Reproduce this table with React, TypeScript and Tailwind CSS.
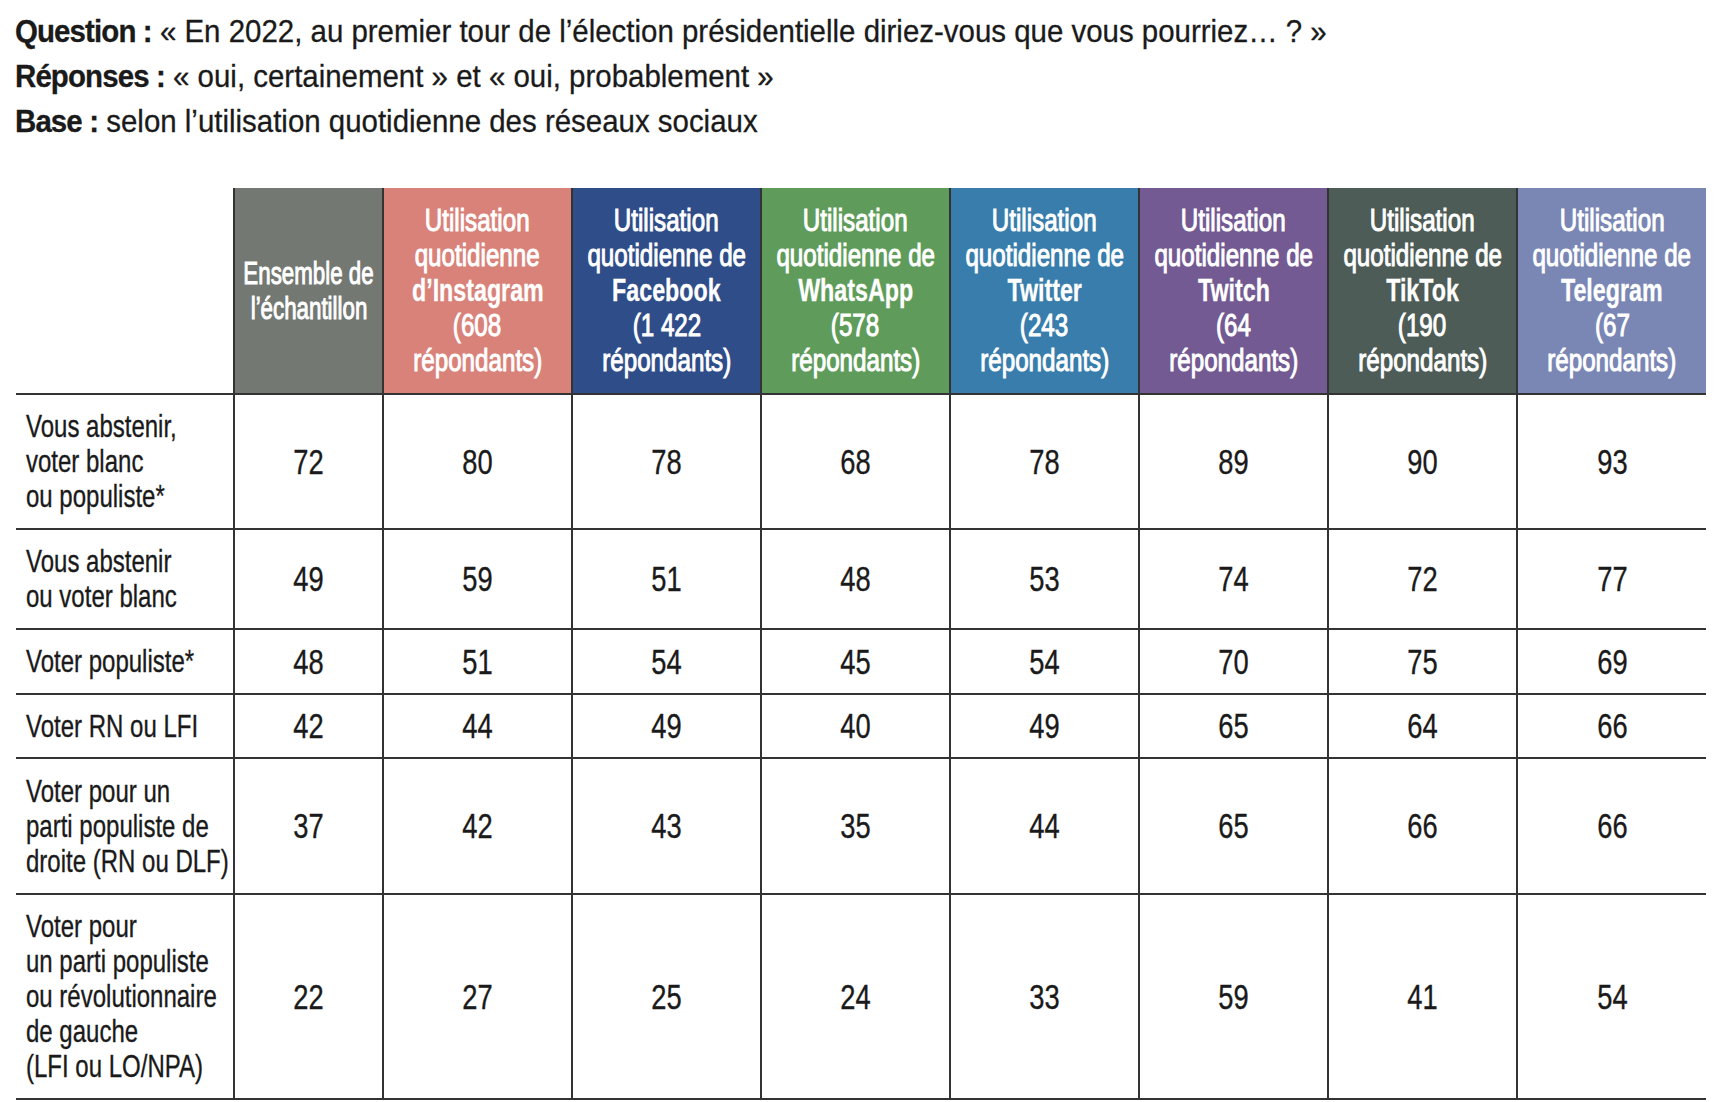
const columns = [
  { bg: "bg-[#737873]", lines: ["Ensemble de", "l’échantillon"], bold: -1 },
  { bg: "bg-[#d8827a]", lines: ["Utilisation", "quotidienne", "d’Instagram", "(608", "répondants)"], bold: 2 },
  { bg: "bg-[#2f4d88]", lines: ["Utilisation", "quotidienne de", "Facebook", "(1 422", "répondants)"], bold: 2 },
  { bg: "bg-[#5f9c5b]", lines: ["Utilisation", "quotidienne de", "WhatsApp", "(578", "répondants)"], bold: 2 },
  { bg: "bg-[#387dab]", lines: ["Utilisation", "quotidienne de", "Twitter", "(243", "répondants)"], bold: 2 },
  { bg: "bg-[#735a92]", lines: ["Utilisation", "quotidienne de", "Twitch", "(64", "répondants)"], bold: 2 },
  { bg: "bg-[#4d5c56]", lines: ["Utilisation", "quotidienne de", "TikTok", "(190", "répondants)"], bold: 2 },
  { bg: "bg-[#7a87b4]", lines: ["Utilisation", "quotidienne de", "Telegram", "(67", "répondants)"], bold: 2 },
];

const rows = [
  { label: ["Vous abstenir,", "voter blanc", "ou populiste*"], h: "h-[135px]", values: [72, 80, 78, 68, 78, 89, 90, 93] },
  { label: ["Vous abstenir", "ou voter blanc"], h: "h-[100px]", values: [49, 59, 51, 48, 53, 74, 72, 77] },
  { label: ["Voter populiste*"], h: "h-[65px]", values: [48, 51, 54, 45, 54, 70, 75, 69] },
  { label: ["Voter RN ou LFI"], h: "h-[64px]", values: [42, 44, 49, 40, 49, 65, 64, 66] },
  { label: ["Voter pour un", "parti populiste de", "droite (RN ou DLF)"], h: "h-[136px]", values: [37, 42, 43, 35, 44, 65, 66, 66] },
  {
    label: ["Voter pour", "un parti populiste", "ou révolutionnaire", "de gauche", "(LFI ou LO/NPA)"],
    h: "h-[205px]",
    values: [22, 27, 25, 24, 33, 59, 41, 54],
  },
];

// Liberation Sans squeezed horizontally to stand in for a condensed grotesque
function Narrow({ className = "", children }: { className?: string; children: React.ReactNode }) {
  return <span className={`inline-block whitespace-nowrap ${className}`}>{children}</span>;
}

export default function App() {
  return (
    <div className="min-h-screen bg-white pl-[15px] pt-[9px] font-['Liberation_Sans',Arial,sans-serif] text-[#1a1a1a]">
      <div className="text-[32px] leading-[45px] [-webkit-text-stroke:0.3px_#1a1a1a]">
        <p>
          <Narrow className="origin-left scale-x-[0.92]">
            <b className="font-bold tracking-[-0.03em]">Question :</b> « En 2022, au premier tour de l’élection présidentielle diriez-vous que vous pourriez… ? »
          </Narrow>
        </p>
        <p>
          <Narrow className="origin-left scale-x-[0.92]">
            <b className="font-bold tracking-[-0.03em]">Réponses :</b> « oui, certainement » et « oui, probablement »
          </Narrow>
        </p>
        <p>
          <Narrow className="origin-left scale-x-[0.92]">
            <b className="font-bold tracking-[-0.03em]">Base :</b> selon l’utilisation quotidienne des réseaux sociaux
          </Narrow>
        </p>
      </div>

      <table className="ml-px mt-[44px] w-[1690px] table-fixed border-collapse">
        <colgroup>
          <col className="w-[218px]" />
          <col className="w-[149px]" />
          {columns.slice(1).map((c) => (
            <col key={c.lines[2]} className="w-[189px]" />
          ))}
        </colgroup>
        <thead>
          <tr className="h-[206px]">
            <th className="border-b-2 border-[#333]" />
            {columns.map((c, ci) => (
              <th key={c.lines.join("")} className={`${c.bg} border-b-2 border-l-2 border-[#333] p-0 align-middle font-normal text-white`}>
                <div className="flex flex-col items-center text-[31px] leading-[35px]">
                  {c.lines.map((line, i) =>
                    i === c.bold ? (
                      <Narrow key={line} className="scale-x-[0.75] font-bold [-webkit-text-stroke:0.3px_white]">
                        {line}
                      </Narrow>
                    ) : (
                      <Narrow
                        key={line}
                        className={`${ci === 0 ? "scale-x-[0.72]" : "scale-x-[0.78]"} [-webkit-text-stroke:1px_white]`}
                      >
                        {line}
                      </Narrow>
                    ),
                  )}
                </div>
              </th>
            ))}
          </tr>
        </thead>
        <tbody className="[-webkit-text-stroke:0.35px_#1a1a1a]">
          {rows.map((r) => (
            <tr key={r.label.join(" ")} className={r.h}>
              <td className="border-b-2 border-[#333] p-0 pl-[10px] text-left align-middle text-[32px] leading-[35px]">
                {r.label.map((line) => (
                  <div key={line}>
                    <Narrow className="origin-left scale-x-[0.75]">{line}</Narrow>
                  </div>
                ))}
              </td>
              {r.values.map((v, i) => (
                <td key={i} className="border-b-2 border-l-2 border-[#333] p-0 text-center align-middle text-[35px] leading-[40px]">
                  <Narrow className="scale-x-[0.78]">{v}</Narrow>
                </td>
              ))}
            </tr>
          ))}
        </tbody>
      </table>
    </div>
  );
}
